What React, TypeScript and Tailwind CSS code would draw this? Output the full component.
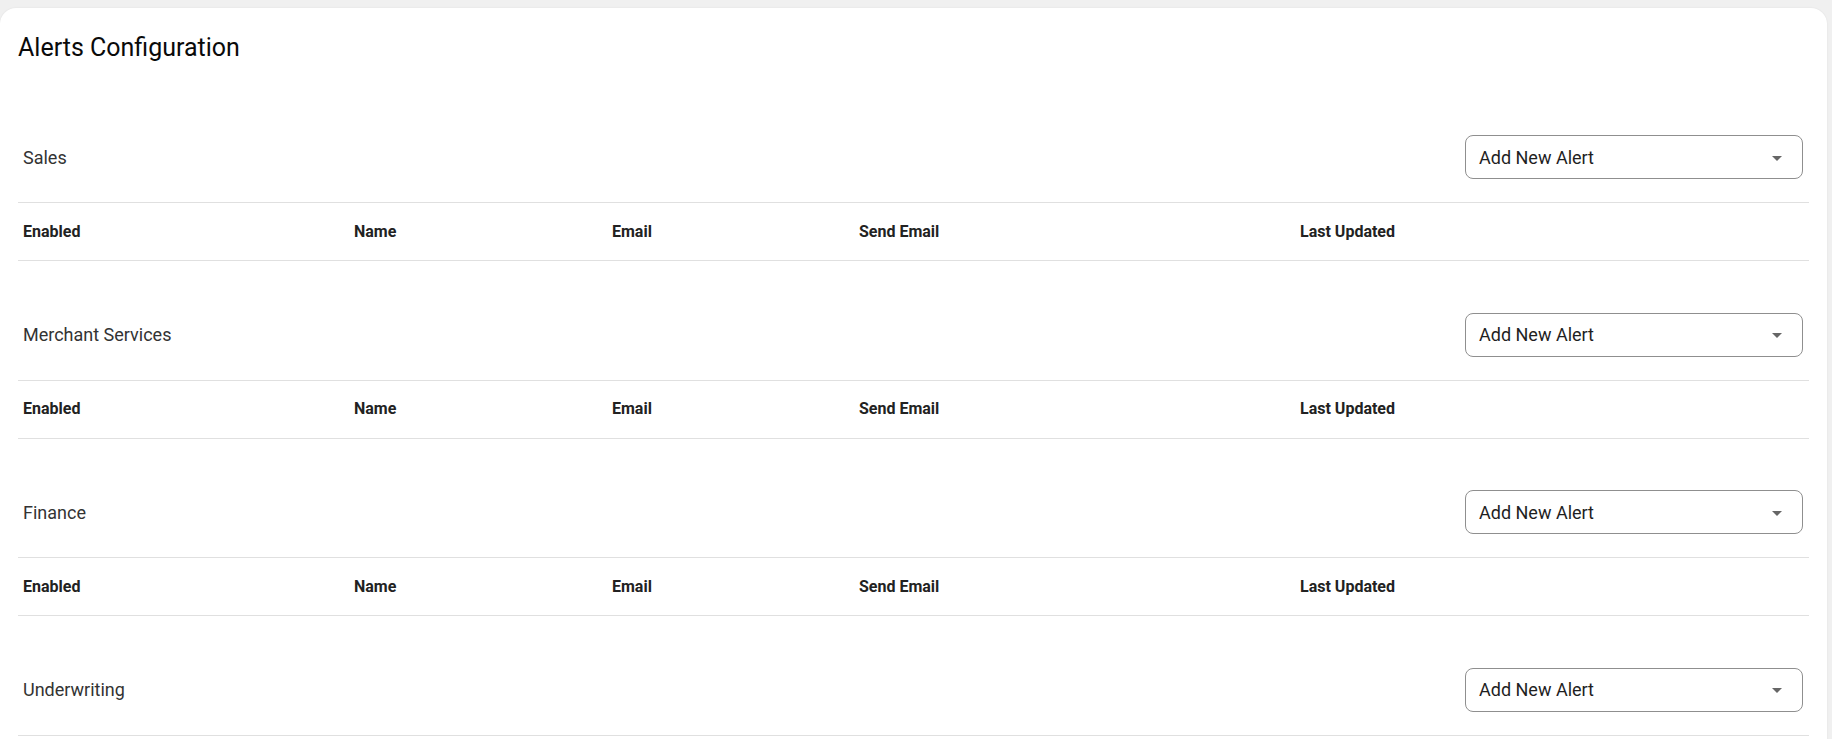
import React from "react";

const sections = ["Sales", "Merchant Services", "Finance", "Underwriting"];
const cols: { label: string; w: string }[] = [
  { label: "Enabled", w: "w-[331px]" },
  { label: "Name", w: "w-[258px]" },
  { label: "Email", w: "w-[247px]" },
  { label: "Send Email", w: "w-[441px]" },
  { label: "Last Updated", w: "flex-1" },
];

function Select() {
  return (
    <div className="mr-[6px] flex h-[44px] w-[338px] items-center justify-between rounded-[8px] border border-[#8f8f8f] bg-white pl-[13px] pr-[20px]">
      <span className="text-[18px] text-[#1f1f1f]">Add New Alert</span>
      <svg width="10" height="5" viewBox="0 0 10 5" className="mt-[2px]">
        <path d="M0 0 L10 0 L5 5 Z" fill="#666666" />
      </svg>
    </div>
  );
}

function Section({ title }: { title: string }) {
  return (
    <div className="mb-[51.5px]">
      <div className="flex h-[44px] items-center justify-between">
        <span className="pl-[5px] text-[18px] text-[#333333]">{title}</span>
        <Select />
      </div>
      <div className="mt-[23px] flex h-[59px] items-center border-y border-[#e0e0e0]">
        {cols.map((c) => (
          <div key={c.label} className={`${c.w} pl-[5px] text-[16px] font-bold text-[#222222]`}>
            {c.label}
          </div>
        ))}
      </div>
    </div>
  );
}

export default function App() {
  return (
    <div
      className="h-[739px] overflow-hidden bg-[#f0f0f0] pr-[5px] pt-[8px]"
      style={{ fontFamily: "Roboto, 'Liberation Sans', sans-serif" }}
    >
      <div className="min-h-[800px] rounded-[16px] bg-white px-[18px] pt-[24px] shadow-[0_0_2px_rgba(0,0,0,0.08)]">
        <h1 className="h-[32px] text-[25px] leading-[32px] text-[#0a0a0a]">Alerts Configuration</h1>
        <div className="mt-[71px]">
          {sections.map((s) => (
            <Section key={s} title={s} />
          ))}
        </div>
      </div>
    </div>
  );
}
